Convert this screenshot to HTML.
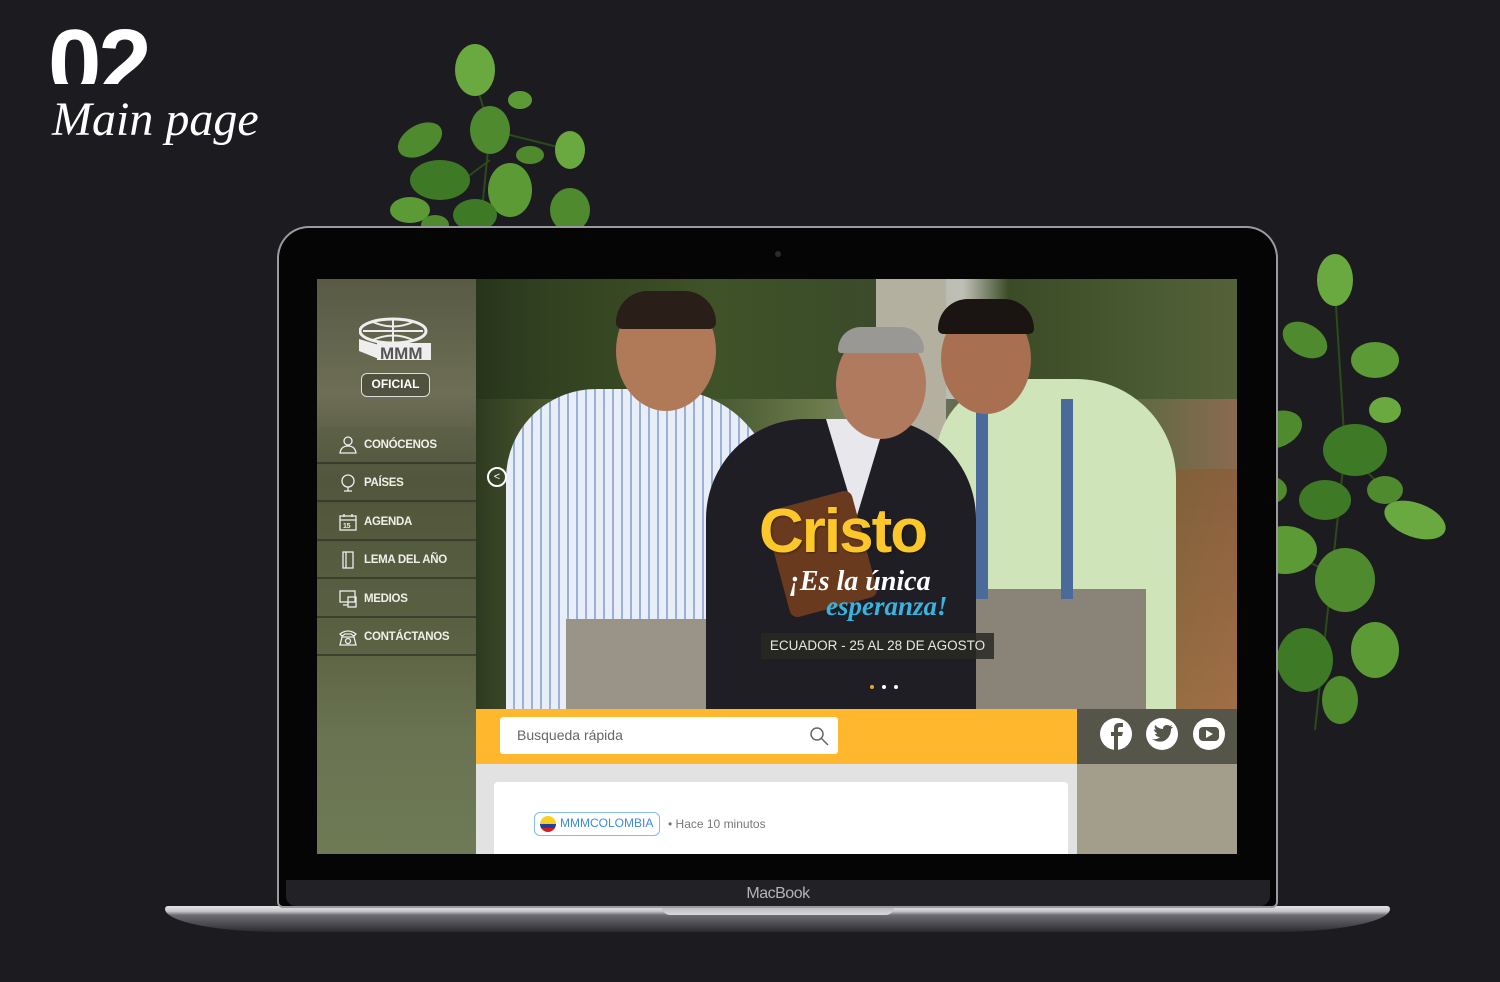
<!DOCTYPE html>
<html><head><meta charset="utf-8"><style>
*{margin:0;padding:0;box-sizing:border-box}
body{width:1500px;height:982px;background:#1c1b20;overflow:hidden;position:relative;font-family:"Liberation Sans",sans-serif}
.abs{position:absolute}
.menu div{position:absolute;left:0;width:159px;height:37px;border-bottom:2px solid rgba(40,42,30,.6);background:rgba(90,95,70,.35);color:#f0f0e8;font-size:11.5px;font-weight:bold;line-height:37px;padding-left:47px;letter-spacing:-.3px}
.menu svg{position:absolute;left:22px;top:9px}
</style></head><body>
<div class="abs" style="left:48px;top:16px;height:68px;overflow:hidden;color:#fff;font-weight:bold;font-size:96px;line-height:96px;letter-spacing:-3px">02</div>
<div class="abs" style="left:52px;top:92px;color:#fff;font-family:'Liberation Serif',serif;font-style:italic;font-size:48px;line-height:56px">Main page</div>

<!-- plants -->
<svg class="abs" style="left:380px;top:40px" width="220" height="190" viewBox="0 0 220 190">
<path d="M95 40 L110 90 L100 190 M110 90 L190 110 M70 150 L110 120" stroke="#2c4a1a" stroke-width="2" fill="none"/>
<g fill="#4f8a2e"><ellipse cx="95" cy="30" rx="20" ry="26" fill="#6aa840"/><ellipse cx="110" cy="90" rx="20" ry="24"/><ellipse cx="40" cy="100" rx="24" ry="15" transform="rotate(-30 40 100)"/><ellipse cx="60" cy="140" rx="30" ry="20" fill="#3e7a26"/><ellipse cx="130" cy="150" rx="22" ry="27" fill="#5c9a36"/><ellipse cx="190" cy="110" rx="15" ry="19" fill="#6aa840"/><ellipse cx="190" cy="170" rx="20" ry="22"/><ellipse cx="30" cy="170" rx="20" ry="13" fill="#5c9a36"/><ellipse cx="150" cy="115" rx="14" ry="9"/><ellipse cx="95" cy="175" rx="22" ry="16" fill="#3e7a26"/><ellipse cx="140" cy="60" rx="12" ry="9" fill="#5c9a36"/><ellipse cx="55" cy="185" rx="14" ry="10"/></g></svg>
<svg class="abs" style="left:1235px;top:250px" width="220" height="500" viewBox="0 0 220 500">
<path d="M100 40 L110 200 L80 480 M110 200 L180 270 M110 330 L50 300" stroke="#2c4a1a" stroke-width="2" fill="none"/>
<g fill="#4f8a2e"><ellipse cx="100" cy="30" rx="18" ry="26" fill="#6aa840"/><ellipse cx="70" cy="90" rx="24" ry="16" transform="rotate(30 70 90)"/><ellipse cx="140" cy="110" rx="24" ry="18" fill="#5c9a36"/><ellipse cx="40" cy="180" rx="28" ry="18" transform="rotate(-20 40 180)"/><ellipse cx="120" cy="200" rx="32" ry="26" fill="#3e7a26"/><ellipse cx="180" cy="270" rx="32" ry="17" transform="rotate(20 180 270)" fill="#6aa840"/><ellipse cx="50" cy="300" rx="32" ry="24" fill="#5c9a36"/><ellipse cx="110" cy="330" rx="30" ry="32"/><ellipse cx="70" cy="410" rx="28" ry="32" fill="#3e7a26"/><ellipse cx="140" cy="400" rx="24" ry="28" fill="#5c9a36"/><ellipse cx="30" cy="240" rx="22" ry="15"/><ellipse cx="150" cy="160" rx="16" ry="13" fill="#6aa840"/><ellipse cx="90" cy="250" rx="26" ry="20" fill="#3e7a26"/><ellipse cx="150" cy="240" rx="18" ry="14"/><ellipse cx="105" cy="450" rx="18" ry="24" fill="#4f8a2e"/></g></svg>

<!-- laptop base -->
<div class="abs" style="left:165px;top:906px;width:1225px;height:26px;border-radius:3px 3px 120px 120px/3px 3px 24px 24px;background:linear-gradient(#e4e4e6 0,#c8c8cc 20%,#6c6c72 35%,#4a4a50 70%,#2a2a2e 100%)"></div>
<div class="abs" style="left:662px;top:906px;width:232px;height:9px;border-radius:0 0 8px 8px;background:linear-gradient(#b8b8bc,#d8d8dc)"></div>
<!-- lid -->
<div class="abs" style="left:277px;top:226px;width:1001px;height:682px;border-radius:32px 32px 6px 6px;background:#9a9aa0;padding:2px">
<div style="width:100%;height:100%;border-radius:30px 30px 4px 4px;background:#050506"></div></div>
<div class="abs" style="left:775px;top:251px;width:6px;height:6px;border-radius:3px;background:#2a2a30"></div>
<div class="abs" style="left:286px;top:880px;width:984px;height:26px;background:#222226;border-radius:0 0 10px 10px;color:#b4b4b8;font-size:16px;text-align:center;line-height:28px;letter-spacing:-.5px">MacBook</div>

<!-- screen -->
<div class="abs" style="left:317px;top:279px;width:920px;height:575px;overflow:hidden;background:#fff">
 <div class="abs" style="left:0;top:0;width:159px;height:575px;background:linear-gradient(180deg,#595a44 0%,#6d6e55 20%,#4e5238 35%,#5a6141 60%,#6a7352 80%,#6e7a55 100%)">
  <svg class="abs" style="left:42px;top:38px" width="72" height="44" viewBox="0 0 72 44"><ellipse cx="34" cy="14" rx="33" ry="12" fill="none" stroke="#eee" stroke-width="3"/><path d="M4 14 H64 M34 2 V26 M14 5 Q34 14 54 5 M14 23 Q34 14 54 23" stroke="#eee" stroke-width="2" fill="none"/><path d="M0 22 L20 28 L20 42 L0 34Z" fill="#eee"/><rect x="18" y="26" width="54" height="17" fill="#eee"/><text x="21" y="42" font-size="17" font-weight="bold" fill="#555">MMM</text></svg>
  <div class="abs" style="left:44px;top:94px;width:69px;height:24px;border:1.5px solid #ddd;border-radius:6px;background:rgba(70,70,55,.7);color:#fff;font-size:12px;font-weight:bold;text-align:center;line-height:21px">OFICIAL</div>
  <div class="menu abs" style="left:0;top:148px">
   <div style="top:0"><svg width="18" height="18" viewBox="0 0 18 18" fill="none" stroke="#eee" stroke-width="1.3"><circle cx="9" cy="5" r="4"/><path d="M1 17 Q2 10 9 10 Q16 10 17 17Z"/></svg>CONÓCENOS</div>
   <div style="top:38px"><svg width="18" height="18" viewBox="0 0 18 18" fill="none" stroke="#eee" stroke-width="1.3"><circle cx="9" cy="7" r="6"/><path d="M9 13 V17 M5 17 H13"/></svg>PAÍSES</div>
   <div style="top:77px"><svg width="18" height="18" viewBox="0 0 18 18" fill="none" stroke="#eee" stroke-width="1.3"><rect x="1" y="3" width="16" height="14"/><path d="M1 7 H17 M5 1 V4 M13 1 V4"/><text x="4" y="15" font-size="7" fill="#eee" stroke="none">15</text></svg>AGENDA</div>
   <div style="top:115px"><svg width="18" height="18" viewBox="0 0 18 18" fill="none" stroke="#eee" stroke-width="1.3"><rect x="4" y="1" width="10" height="16"/><path d="M7 1 V17"/></svg>LEMA DEL AÑO</div>
   <div style="top:154px"><svg width="18" height="18" viewBox="0 0 18 18" fill="none" stroke="#eee" stroke-width="1.3"><rect x="1" y="1" width="15" height="11"/><rect x="9" y="7" width="8" height="10"/><path d="M4 15 H9"/></svg>MEDIOS</div>
   <div style="top:192px"><svg width="18" height="18" viewBox="0 0 18 18" fill="none" stroke="#eee" stroke-width="1.3"><path d="M1 6 Q9 0 17 6 L15 8 L12 6 L6 6 L3 8Z"/><path d="M3 9 L15 9 L17 17 H1Z"/><circle cx="9" cy="13" r="2.5"/></svg>CONTÁCTANOS</div>
  </div>
 </div>
 <div class="abs" style="left:159px;top:0;width:761px;height:430px;overflow:hidden;background:linear-gradient(90deg,#2e3a20 0%,#4a5a30 10%,#3a4a26 25%,#6a7a4a 45%,#8a8a80 55%,#3e5028 70%,#5a6a40 85%,#8a6a50 100%)">
  <div class="abs" style="left:0;top:0;width:761px;height:120px;background:linear-gradient(90deg,#26331a,#3e5226 30%,#2e3e20 55%,#c0c0b8 58%,#d0d0c8 64%,#3a4a26 70%,#4c6034 100%);opacity:.85"></div>
  <div class="abs" style="left:400px;top:0;width:70px;height:300px;background:#b4b0a0"></div>
  <div class="abs" style="left:650px;top:190px;width:111px;height:240px;background:linear-gradient(#8a5a30,#b07040);opacity:.6"></div>
  <div class="abs" style="left:30px;top:110px;width:270px;height:330px;border-radius:90px 110px 0 0;background:repeating-linear-gradient(90deg,#e8eef8 0 7px,#9ab0d8 7px 9px),#dde6f4"></div>
  <div class="abs" style="left:90px;top:340px;width:160px;height:100px;background:#9a9488"></div>
  <div class="abs" style="left:140px;top:12px;width:100px;height:120px;border-radius:50%;background:#b07a58"></div>
  <div class="abs" style="left:140px;top:12px;width:100px;height:38px;border-radius:50px 50px 10px 10px;background:#2a1e18"></div>
  <div class="abs" style="left:460px;top:100px;width:240px;height:340px;border-radius:80px 100px 0 0;background:#cfe4b8"></div>
  <div class="abs" style="left:500px;top:310px;width:170px;height:130px;background:#8a8478"></div>
  <div class="abs" style="left:500px;top:120px;width:12px;height:200px;background:#4a6a9a"></div>
  <div class="abs" style="left:585px;top:120px;width:12px;height:200px;background:#4a6a9a"></div>
  <div class="abs" style="left:465px;top:25px;width:90px;height:110px;border-radius:50%;background:#a87050"></div>
  <div class="abs" style="left:462px;top:20px;width:96px;height:35px;border-radius:48px 48px 8px 8px;background:#1a1412"></div>
  <div class="abs" style="left:230px;top:140px;width:270px;height:300px;border-radius:100px 100px 0 0;background:#1e1e24"></div>
  <div class="abs" style="left:350px;top:140px;width:60px;height:100px;background:#e8e8ec;clip-path:polygon(0 0,100% 0,50% 100%)"></div>
  <div class="abs" style="left:360px;top:50px;width:90px;height:110px;border-radius:50%;background:#b07a5e"></div>
  <div class="abs" style="left:362px;top:48px;width:86px;height:26px;border-radius:43px 43px 6px 6px;background:#9a9894"></div>
  <div class="abs" style="left:300px;top:220px;width:90px;height:110px;background:#6a3a1e;border-radius:8px;transform:rotate(-15deg)"></div>
  <div class="abs" style="left:11px;top:188px;width:20px;height:20px;border:2px solid #fff;border-radius:50%;color:#fff;font-size:11px;line-height:16px;text-align:center">&lt;</div>
  <div class="abs" style="left:283px;top:218px;color:#fbc72a;font-weight:bold;font-size:62px;letter-spacing:-2px;line-height:70px;text-shadow:1px 1px 2px rgba(0,0,0,.4)">Cristo</div>
  <div class="abs" style="left:313px;top:288px;color:#fff;font-family:'Liberation Serif',serif;font-style:italic;font-weight:bold;font-size:28px;line-height:30px">¡Es la única</div>
  <div class="abs" style="left:350px;top:312px;color:#3ab2e0;font-family:'Liberation Serif',serif;font-style:italic;font-weight:bold;font-size:27px;line-height:30px">esperanza!</div>
  <div class="abs" style="left:285px;top:354px;width:233px;height:26px;background:rgba(40,40,35,.85);color:#e8e8e0;font-size:13.5px;line-height:26px;text-align:center">ECUADOR - 25 AL 28 DE AGOSTO</div>
  <div class="abs" style="left:394px;top:406px;width:4px;height:4px;border-radius:2px;background:#f0a020"></div>
  <div class="abs" style="left:406px;top:406px;width:4px;height:4px;border-radius:2px;background:#fff"></div>
  <div class="abs" style="left:418px;top:406px;width:4px;height:4px;border-radius:2px;background:#fff"></div>
 </div>
 <div class="abs" style="left:159px;top:430px;width:601px;height:55px;background:#ffb72e"></div>
 <div class="abs" style="left:183px;top:438px;width:338px;height:37px;background:#fff;border-radius:3px;color:#666;font-size:14px;line-height:37px;padding-left:17px">Busqueda rápida
  <svg class="abs" style="left:309px;top:9px" width="20" height="20" viewBox="0 0 20 20" fill="none" stroke="#666" stroke-width="1.5"><circle cx="8" cy="8" r="6"/><path d="M12.5 12.5 L19 19"/></svg></div>
 <div class="abs" style="left:760px;top:430px;width:160px;height:55px;background:#55554a"></div>
 <div class="abs" style="left:760px;top:485px;width:160px;height:90px;background:#a29e8b"></div>
 <svg class="abs" style="left:782px;top:438px" width="130" height="34" viewBox="0 0 130 34">
  <circle cx="17" cy="17" r="16" fill="#fff"/><path d="M19 33 V19 H23 L24 15 H19 V12 Q19 10 21 10 H24 V6 H20 Q15 6 15 11 V15 H12 V19 H15 V33Z" fill="#55554a"/>
  <circle cx="63" cy="17" r="16" fill="#fff"/><path d="M53 22 Q58 23 61 20 Q57 20 56 17 Q58 17 58 16 Q55 15 55 12 Q56 13 57 13 Q55 10 56 8 Q60 12 64 12 Q64 8 68 8 Q70 8 71 9 L73 8 L72 10 L74 10 L72 12 Q72 20 65 24 Q59 26 53 22Z" fill="#55554a"/>
  <circle cx="110" cy="17" r="16" fill="#fff"/><rect x="100" y="10" width="20" height="14" rx="4" fill="#55554a"/><path d="M107 13 L114 17 L107 21Z" fill="#fff"/>
 </svg>
 <div class="abs" style="left:159px;top:485px;width:601px;height:90px;background:#e2e2e2"></div>
 <div class="abs" style="left:177px;top:503px;width:574px;height:80px;background:#fff;border-radius:4px"></div>
 <div class="abs" style="left:217px;top:533px;width:126px;height:24px;border:1.5px solid #8ab8f0;border-radius:6px;color:#3a8ae0;font-size:12px;line-height:21px;padding-left:25px">MMMCOLOMBIA
  <div class="abs" style="left:5px;top:3px;width:16px;height:16px;border-radius:8px;background:linear-gradient(#f8d020 0 50%,#2040a0 50% 75%,#d02020 75%)"></div></div>
 <div class="abs" style="left:351px;top:538px;color:#777;font-size:12px">• Hace 10 minutos</div>
</div>
</body></html>
